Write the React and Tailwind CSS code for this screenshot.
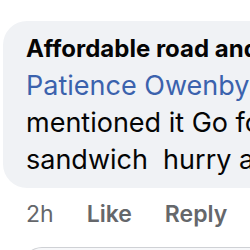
import React from "react";

function CommentBubble() {
  return (
    <div className="w-[320px] shrink-0 rounded-l-[24px] bg-[#f0f2f5] pl-[23px] pt-[10px] pb-[10px]">
      <div className="whitespace-nowrap text-[24px] font-bold leading-[36px] text-[#050505]">
        Affordable road and
      </div>
      <div className="whitespace-nowrap text-[27px] leading-[37px] text-[#050505]">
        <div className="text-[#3b62ad]">Patience Owenby</div>
        <div>mentioned it Go for</div>
        <div>sandwich&nbsp; hurry and</div>
      </div>
    </div>
  );
}

function CommentActions() {
  return (
    <div className="mt-[11px] flex items-center gap-[33px] whitespace-nowrap pl-[23px] text-[23px] leading-[30px] text-[#65676b]">
      <span>2h</span>
      <span className="font-semibold">Like</span>
      <span className="font-semibold">Reply</span>
    </div>
  );
}

export default function App() {
  return (
    <div
      className="h-[250px] w-[250px] overflow-hidden bg-white pl-[3px] pt-[21px]"
      style={{ fontFamily: "Inter, 'Liberation Sans', sans-serif" }}
    >
      <CommentBubble />
      <CommentActions />
      <div className="ml-[19px] mt-[18px] h-[40px] w-[300px] rounded-tl-[20px] border-l border-t border-[#cfd1d5] bg-[#f7f8fa]" />
    </div>
  );
}
